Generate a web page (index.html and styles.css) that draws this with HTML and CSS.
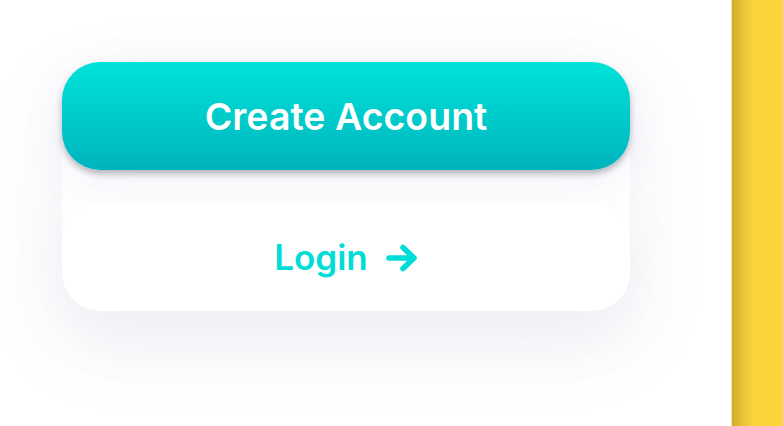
FILE: index.html
```html
<!DOCTYPE html>
<html>
<head>
<meta charset="utf-8">
<link rel="stylesheet" href="styles.css">
</head>
<body>
<div class="page">
  <main class="main">
    <div class="actions">
      <button class="btn btn-primary">Create Account</button>
      <button class="btn btn-secondary">Login
        <svg class="arrow" width="32" height="28" viewBox="0 0 32 28"><path d="M3 14H28M17 3.5L28 14L17 24.5" fill="none" stroke="currentColor" stroke-width="5.5" stroke-linecap="round" stroke-linejoin="round"/></svg>
      </button>
    </div>
  </main>
  <aside class="side"></aside>
</div>
</body>
</html>
```
FILE: styles.css
```css
html, body {
  margin: 0;
  padding: 0;
  background: #ffffff;
  width: 783px;
  height: 426px;
  overflow: hidden;
}
.page {
  display: flex;
  height: 426px;
}
.main {
  width: 731px;
  flex: none;
  padding: 62px 0 0 62px;
  box-sizing: border-box;
}
.actions {
  display: flex;
  flex-direction: column;
  gap: 33px;
  width: 568px;
  border-radius: 40px;
  box-shadow: 0 30px 80px rgba(150, 150, 190, 0.13);
}
.btn {
  height: 108px;
  border: none;
  border-radius: 38px;
  font-family: "Inter", "DejaVu Sans", sans-serif;
  font-weight: 600;
  display: flex;
  align-items: center;
  justify-content: center;
  gap: 18px;
  padding: 0;
}
.btn-primary {
  color: #ffffff;
  font-size: 37.5px;
  background: linear-gradient(180deg, #00e3d9 0%, #00b4bd 100%);
  box-shadow: 0 4px 6px rgba(60, 60, 80, 0.35), 0 10px 40px rgba(140, 130, 200, 0.10);
}
.btn-secondary {
  color: #00dcd6;
  font-size: 35px;
  background: #ffffff;
  box-shadow: 0 20px 70px rgba(140, 140, 170, 0.06);
}
.arrow {
  margin-top: 2px;
}
.side {
  flex: 1;
  background: linear-gradient(90deg, #d0aa2d 0px, #e8c236 10px, #fbd33a 22px, #fdd63b 100%);
  border-left: 1px solid #efe6c0;
}
```
